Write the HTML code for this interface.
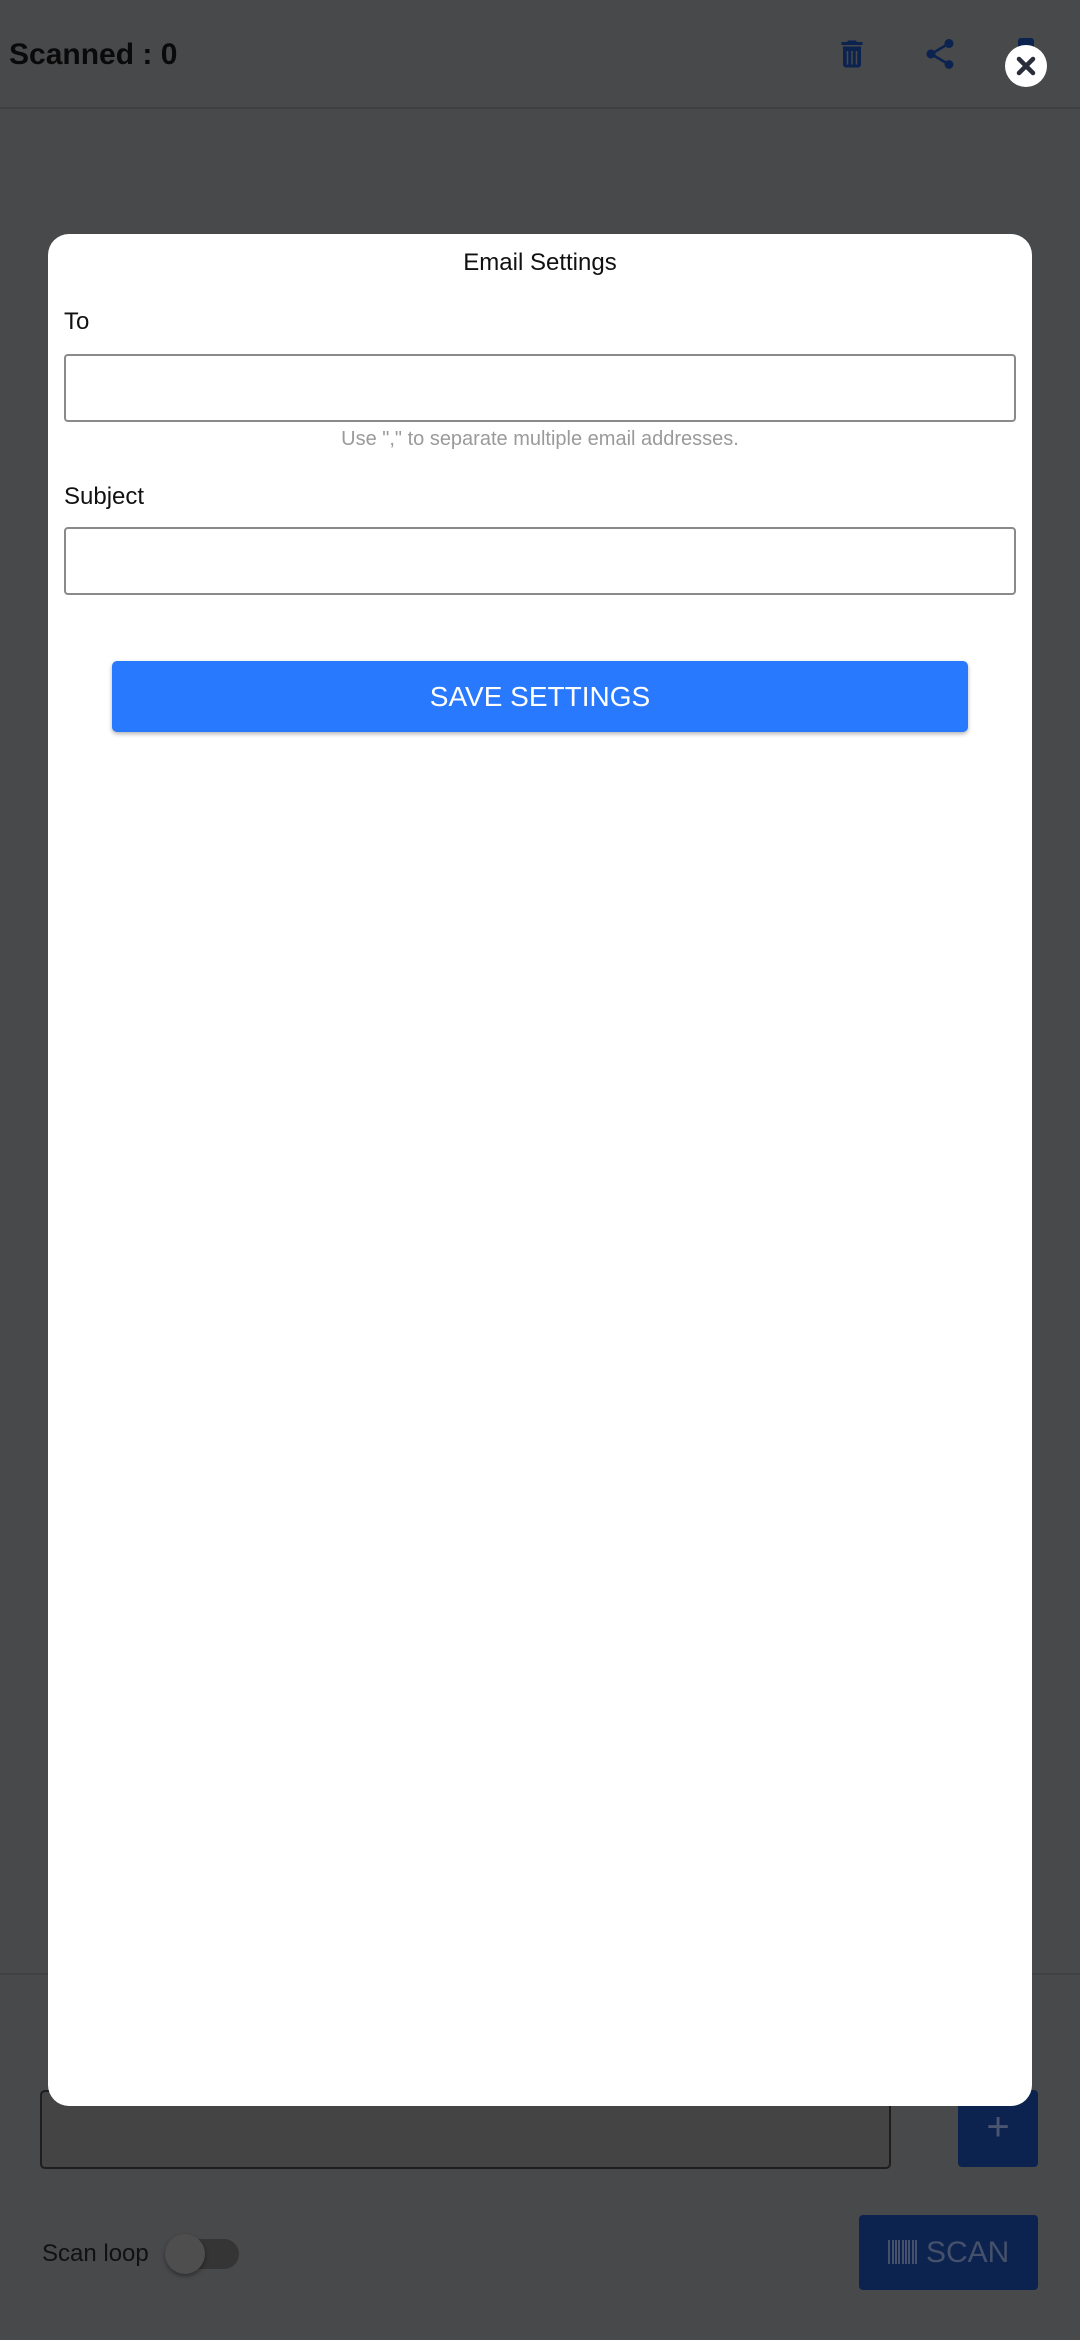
<!DOCTYPE html>
<html><head><meta charset="utf-8"><style>
body{margin:0;width:1080px;height:2340px;background:#48494b;position:relative;overflow:hidden;font-family:"Liberation Sans",sans-serif}
.a{position:absolute}
</style></head><body>
<div class="a" style="left:0;top:0;width:1080px;height:107px;border-bottom:2px solid #3f4042"></div>
<div class="a" style="left:9px;top:38px;font-size:30px;font-weight:bold;color:#0a0a0a">Scanned : 0</div>
<svg class="a" style="left:834px;top:36px" width="36" height="36" viewBox="0 0 24 24"><path fill="#0c2350" d="M6 19c0 1.1.9 2 2 2h8c1.1 0 2-.9 2-2V7H6v12zm2.5-9h1v9h-1zm3 0h1v9h-1zm3 0h1v9h-1zM15.5 4l-1-1h-5l-1 1H5v2h14V4z"/></svg>
<svg class="a" style="left:922px;top:36px" width="36" height="36" viewBox="0 0 24 24"><path fill="#0c2350" d="M18 16.08c-.76 0-1.44.3-1.960.77L8.91 12.7c.05-.23.09-.46.09-.7s-.04-.47-.09-.7l7.050-4.11c.54.5 1.25.81 2.04.81 1.66 0 3-1.34 3-3s-1.34-3-3-3-3 1.34-3 3c0 .24.04.47.09.7L8.04 9.81C7.5 9.31 6.79 9 6 9c-1.66 0-3 1.34-3 3s1.34 3 3 3c.79 0 1.5-.31 2.04-.81l7.12 4.16c-.05.21-.08.43-.08.65 0 1.61 1.31 2.92 2.92 2.92s2.920-1.31 2.92-2.92-1.31-2.92-2.92-2.92z"/></svg>
<div class="a" style="left:1018px;top:38px;width:16px;height:16px;background:#0c2350;border-radius:3px"></div>
<div class="a" style="left:1005px;top:45px;width:42px;height:42px;border-radius:50%;background:#fff"></div>
<svg class="a" style="left:1005px;top:45px" width="42" height="42" viewBox="0 0 42 42"><path d="M14 14L28 28M28 14L14 28" stroke="#2a2d3a" stroke-width="4.5" stroke-linecap="round"/></svg>

<div class="a" style="left:0;top:1973px;width:1080px;height:2px;background:#404143"></div>
<div class="a" style="left:40px;top:2090px;width:847px;height:75px;border:2px solid #1e1e1e;border-radius:5px;background:#444"></div>
<div class="a" style="left:958px;top:2090px;width:80px;height:77px;background:#0c2350;border-radius:4px;color:#4a5570;font-size:40px;text-align:center;line-height:74px">+</div>
<div class="a" style="left:42px;top:2240px;font-size:24px;color:#111">Scan loop</div>
<div class="a" style="left:183px;top:2239px;width:56px;height:30px;border-radius:15px;background:#353535"></div>
<div class="a" style="left:165px;top:2234px;width:40px;height:40px;border-radius:50%;background:#4e4e4e;box-shadow:0 2px 4px rgba(0,0,0,.4)"></div>
<div class="a" style="left:859px;top:2215px;width:179px;height:75px;background:#0c2350;border-radius:4px;color:#45506a;font-size:30px;line-height:75px;text-align:center"><svg width="30" height="24" viewBox="0 0 30 24" style="vertical-align:-2px"><path d="M1 0v24M5 0v24M8 0v24M11 0v24M15 0v24M18 0v24M21 0v24M25 0v24M28 0v24" stroke="#45506a" stroke-width="2"/></svg> SCAN</div>

<div class="a" style="left:48px;top:234px;width:984px;height:1872px;background:#fff;border-radius:21px"></div>
<div class="a" style="left:48px;top:249px;width:984px;text-align:center;font-size:24px;color:#111">Email Settings</div>
<div class="a" style="left:64px;top:308px;font-size:24px;color:#111">To</div>
<div class="a" style="left:64px;top:354px;width:948px;height:64px;border:2px solid #8a8a8a;border-radius:4px"></div>
<div class="a" style="left:48px;top:428px;width:984px;text-align:center;font-size:20px;color:#9a9a9a">Use "," to separate multiple email addresses.</div>
<div class="a" style="left:64px;top:483px;font-size:24px;color:#111">Subject</div>
<div class="a" style="left:64px;top:527px;width:948px;height:64px;border:2px solid #8a8a8a;border-radius:4px"></div>
<div class="a" style="left:112px;top:661px;width:856px;height:71px;background:#2979ff;border-radius:5px;box-shadow:0 2px 4px rgba(0,0,0,.3);color:#fff;font-size:28px;text-align:center;line-height:71px">SAVE SETTINGS</div>
</body></html>
